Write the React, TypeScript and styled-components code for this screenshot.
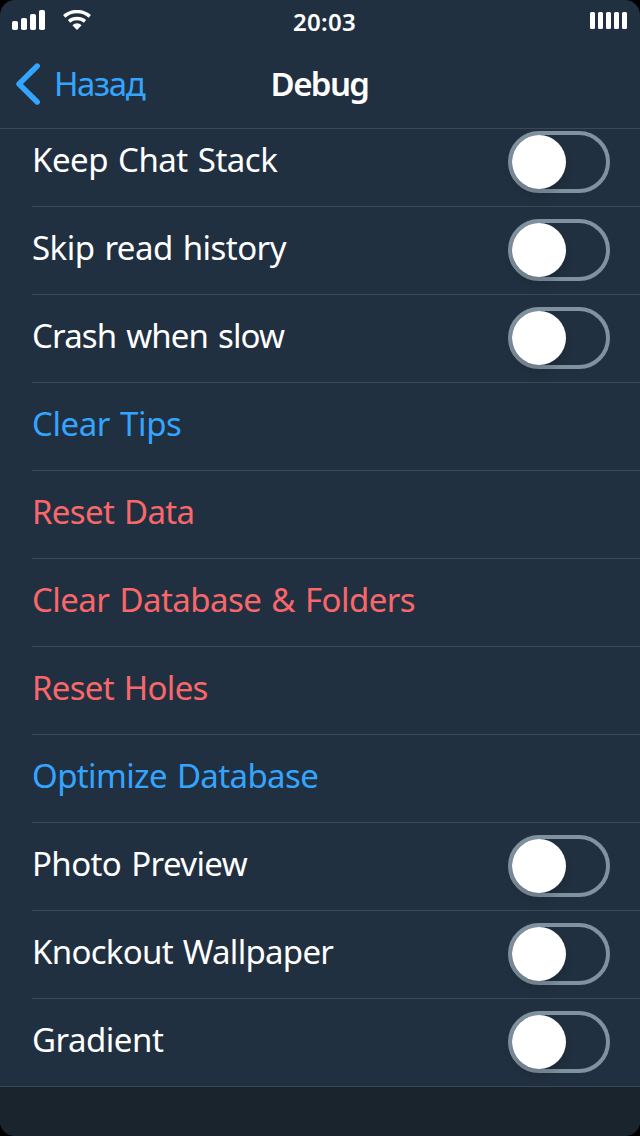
import React from "react";
import styled, { createGlobalStyle } from "styled-components";

const colors = {
  background: "#213040",
  footer: "#1a242d",
  line: "#3c4858",
  accent: "#34a5ff",
  danger: "#f9676a",
  text: "#ffffff",
  track: "#8092a0",
};

const GlobalStyle = createGlobalStyle`
  * { box-sizing: border-box; }
  body { margin: 0; background: #000; }
`;

const Screen = styled.div`
  width: 640px;
  height: 1136px;
  display: flex;
  flex-direction: column;
  overflow: hidden;
  border-radius: 15px;
  background: ${colors.background};
  color: ${colors.text};
  font-family: "Noto Sans", "Open Sans", sans-serif;
`;

const StatusBar = styled.div`
  height: 40px;
  display: grid;
  grid-template-columns: 1fr auto 1fr;
  align-items: start;
  padding: 0 13px 0 12px;
`;

const StatusIcons = styled.div`
  display: flex;
  gap: 18px;
  padding-top: 10px;
`;

const Clock = styled.div`
  padding-top: 7px;
  padding-left: 10px;
  font-size: 24px;
  line-height: 30px;
  font-weight: 600;
  letter-spacing: 0.3px;
`;

const Battery = styled.div`
  display: flex;
  justify-content: flex-end;
  gap: 3px;
  padding-top: 12px;
`;

const BatteryCell = styled.i`
  width: 5px;
  height: 17px;
  border-radius: 1.5px;
  background: ${colors.text};
`;

const NavBar = styled.div`
  height: 89px;
  display: grid;
  grid-template-columns: 1fr auto 1fr;
  align-items: start;
  padding: 0 17px 0 16px;
  border-bottom: 1px solid ${colors.line};
`;

const BackButton = styled.div`
  display: flex;
  gap: 14px;
  padding-top: 22px;
  color: ${colors.accent};
`;

const BackLabel = styled.span`
  font-size: 33px;
  line-height: 44px;
  letter-spacing: -1.4px;
`;

const Title = styled.div`
  padding-top: 22px;
  font-size: 33px;
  line-height: 44px;
  font-weight: 600;
  letter-spacing: -1.6px;
`;

const Content = styled.div`
  flex: 1;
  overflow: hidden;
  background: ${colors.footer};
`;

const List = styled.div`
  margin-top: -10px;
  background: ${colors.background};
  border-bottom: 1px solid ${colors.line};
`;

const Row = styled.div`
  height: 88px;
  margin-left: 32px;
  padding: 12px 30px 0 0;
  display: flex;
  justify-content: space-between;
  align-items: flex-start;
  border-bottom: 1px solid ${colors.line};

  &:last-child {
    height: 87px;
    border-bottom: 0;
  }
`;

const Label = styled.span<{ $tone: Tone; $spacing: number }>`
  padding-top: 7px;
  font-size: 33px;
  line-height: 44px;
  white-space: nowrap;
  word-spacing: 2px;
  letter-spacing: ${(p) => p.$spacing}px;
  color: ${(p) => colors[p.$tone]};
`;

const Track = styled.div`
  width: 102px;
  height: 62px;
  border: 4px solid ${colors.track};
  border-radius: 31px;
`;

const Thumb = styled.div`
  width: 54px;
  height: 54px;
  border-radius: 50%;
  background: ${colors.text};
  box-shadow: 0 6px 10px rgba(0, 0, 0, 0.16);
`;

type Tone = "text" | "accent" | "danger";
interface Item {
  label: string;
  tone: Tone;
  spacing: number;
}

const items: Item[] = [
  { label: "Keep Chat Stack", tone: "text", spacing: -0.5 },
  { label: "Skip read history", tone: "text", spacing: -0.54 },
  { label: "Crash when slow", tone: "text", spacing: -0.83 },
  { label: "Clear Tips", tone: "accent", spacing: -0.43 },
  { label: "Reset Data", tone: "danger", spacing: -0.67 },
  { label: "Clear Database & Folders", tone: "danger", spacing: -0.55 },
  { label: "Reset Holes", tone: "danger", spacing: -0.7 },
  { label: "Optimize Database", tone: "accent", spacing: -0.63 },
  { label: "Photo Preview", tone: "text", spacing: -0.6 },
  { label: "Knockout Wallpaper", tone: "text", spacing: -0.71 },
  { label: "Gradient", tone: "text", spacing: -0.49 },
];

const SignalIcon = () => (
  <svg width="33" height="20" viewBox="0 0 33 20" fill="#fff">
    <rect x="0" y="11" width="6" height="9" rx="1.8" />
    <rect x="9" y="8" width="6" height="12" rx="1.8" />
    <rect x="18" y="4" width="6" height="16" rx="1.8" />
    <rect x="27" y="0" width="6" height="20" rx="1.8" />
  </svg>
);

const WifiIcon = () => (
  <svg width="28" height="20" viewBox="0 0 28 20" fill="none" stroke="#fff">
    <path d="M1.2 6.4A19.5 19.5 0 0 1 26.8 6.4" strokeWidth="3.5" />
    <path d="M6 11.3A12.5 12.5 0 0 1 22 11.3" strokeWidth="3.5" />
    <path d="M9.4 15.2A7.4 7.4 0 0 1 18.6 15.2L14 20Z" fill="#fff" stroke="none" />
  </svg>
);

const BackIcon = () => (
  <svg width="24" height="44" viewBox="0 0 24 44" fill="none">
    <path d="M21.2 4L3 22L21.2 40" stroke={colors.accent} strokeWidth="5.4" strokeLinecap="round" strokeLinejoin="round" />
  </svg>
);

export default function App() {
  return (
    <Screen>
      <GlobalStyle />
      <StatusBar>
        <StatusIcons>
          <SignalIcon />
          <WifiIcon />
        </StatusIcons>
        <Clock>20:03</Clock>
        <Battery>
          {[0, 1, 2, 3, 4].map((n) => (
            <BatteryCell key={n} />
          ))}
        </Battery>
      </StatusBar>
      <NavBar>
        <BackButton>
          <BackIcon />
          <BackLabel>Назад</BackLabel>
        </BackButton>
        <Title>Debug</Title>
      </NavBar>
      <Content>
        <List>
          {items.map((item) => (
            <Row key={item.label}>
              <Label $tone={item.tone} $spacing={item.spacing}>
                {item.label}
              </Label>
              {item.tone === "text" && (
                <Track>
                  <Thumb />
                </Track>
              )}
            </Row>
          ))}
        </List>
      </Content>
    </Screen>
  );
}
